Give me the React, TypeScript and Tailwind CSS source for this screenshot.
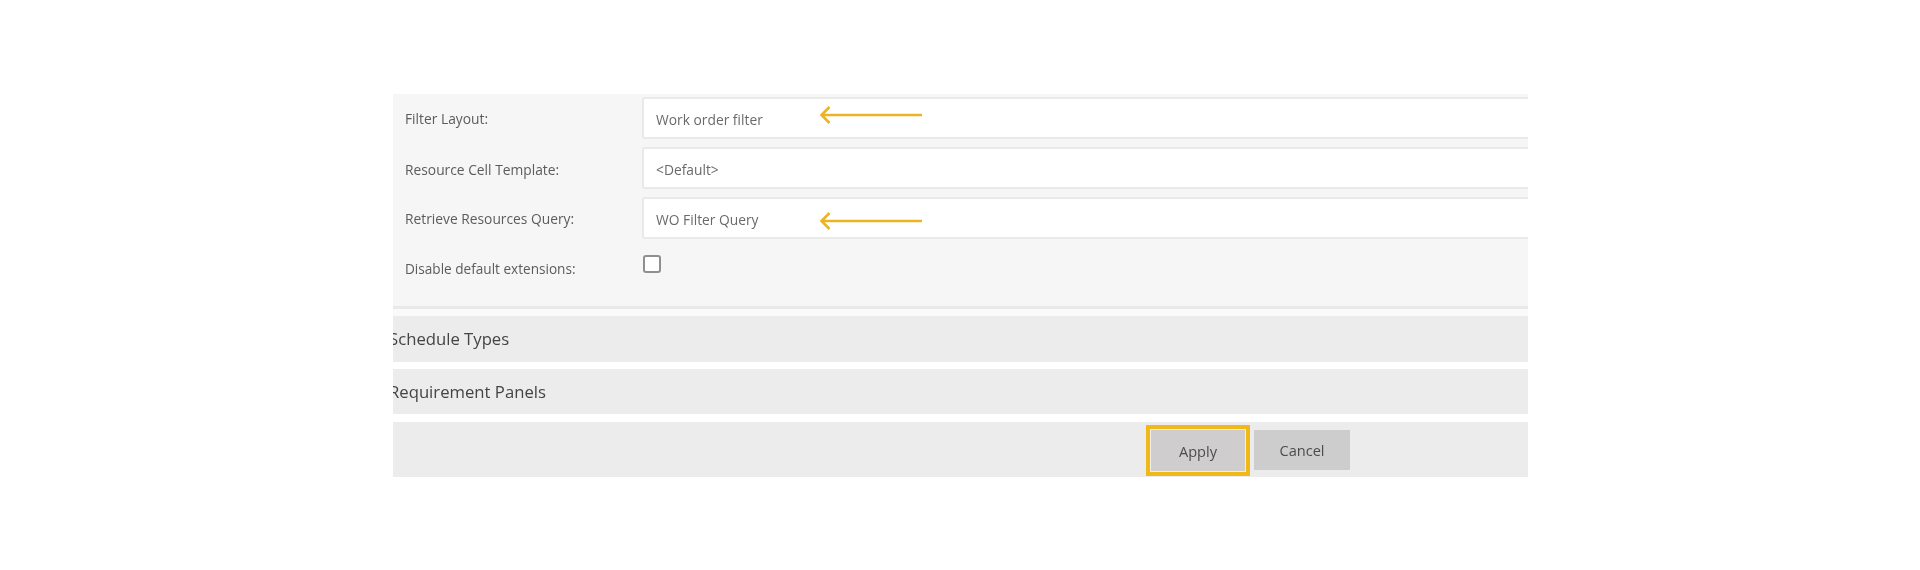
const FONT = "font-['Open_Sans','Noto_Sans',sans-serif]"

function Blurry({ children, className = "" }: { children: React.ReactNode; className?: string }) {
  return <span className={`inline-block blur-[0.7px] ${className}`}>{children}</span>
}

function Arrow({ className }: { className: string }) {
  return (
    <svg className={`absolute left-[175px] ${className}`} width="104" height="20" viewBox="0 0 104 20" fill="none">
      <path d="M103 10H3M10.5 2L2.5 10L10.5 18" stroke="#ecb422" strokeWidth="2.6" />
    </svg>
  )
}

function Row({ label, value, arrow, labelClass }: { label: string; value: string; arrow?: string; labelClass: string }) {
  return (
    <div className="flex h-[42px] mb-2 items-center">
      <div className={`w-[249px] shrink-0 pl-3 text-[13.8px] text-[#5c5c5c] ${labelClass}`}>
        <Blurry>{label}</Blurry>
      </div>
      <div className="relative flex h-full flex-1 items-center rounded-l-[3px] border-y-2 border-l-2 border-[#e9e9e9] bg-white pl-3 pt-1 text-[13.8px] text-[#6a6a6a]">
        <Blurry>{value}</Blurry>
        {arrow && <Arrow className={arrow} />}
      </div>
    </div>
  )
}

function Section({ title, className }: { title: string; className: string }) {
  return (
    <div className={`flex items-center overflow-hidden bg-[#ececec] text-[16.7px] text-[#444] ${className}`}>
      <Blurry className="-ml-1">{title}</Blurry>
    </div>
  )
}

export default function App() {
  return (
    <div className={`h-[570px] bg-white pt-[94px] pl-[393px] ${FONT}`}>
      <div className="w-[1135px]">
        <div className="h-[212px] bg-[#f6f6f6] pt-[3px]">
          <Row label="Filter Layout:" value="Work order filter" arrow="top-[6px]" labelClass="pt-0.5" />
          <Row label="Resource Cell Template:" value="<Default>" labelClass="pt-1" />
          <Row label="Retrieve Resources Query:" value="WO Filter Query" arrow="top-[12px]" labelClass="pt-0.5" />
          <div className="flex items-start pt-2">
            <div className="w-[249px] shrink-0 pl-3 pt-1 text-[13.6px] text-[#5c5c5c]">
              <Blurry>Disable default extensions:</Blurry>
            </div>
            <div className="ml-[1px] size-[18px] rounded-[3px] border-2 border-[#8f8f8f] bg-white blur-[0.4px]" />
          </div>
        </div>
        <div className="h-[3px] bg-[#e9e9e9]" />
        <div className="h-[7px] bg-[#fafafa]" />
        <Section title="Schedule Types" className="h-[46px]" />
        <div className="h-[7px]" />
        <Section title="Requirement Panels" className="h-[45px]" />
        <div className="h-2" />
        <div className="flex h-[55px] items-start bg-[#ececec] pl-[753px] pt-[3px] text-[14.6px] text-[#4c4c4c]">
          <button className="h-[51px] w-[104px] border-[4px] border-[#f0b917] bg-[#d0cdce] pt-0.5 outline outline-1 -outline-offset-[5px] outline-[#eeeeee]">
            <Blurry>Apply</Blurry>
          </button>
          <button className="ml-1 mt-[5px] h-10 w-24 bg-[#cdcdcd] pt-0.5">
            <Blurry>Cancel</Blurry>
          </button>
        </div>
      </div>
    </div>
  )
}
